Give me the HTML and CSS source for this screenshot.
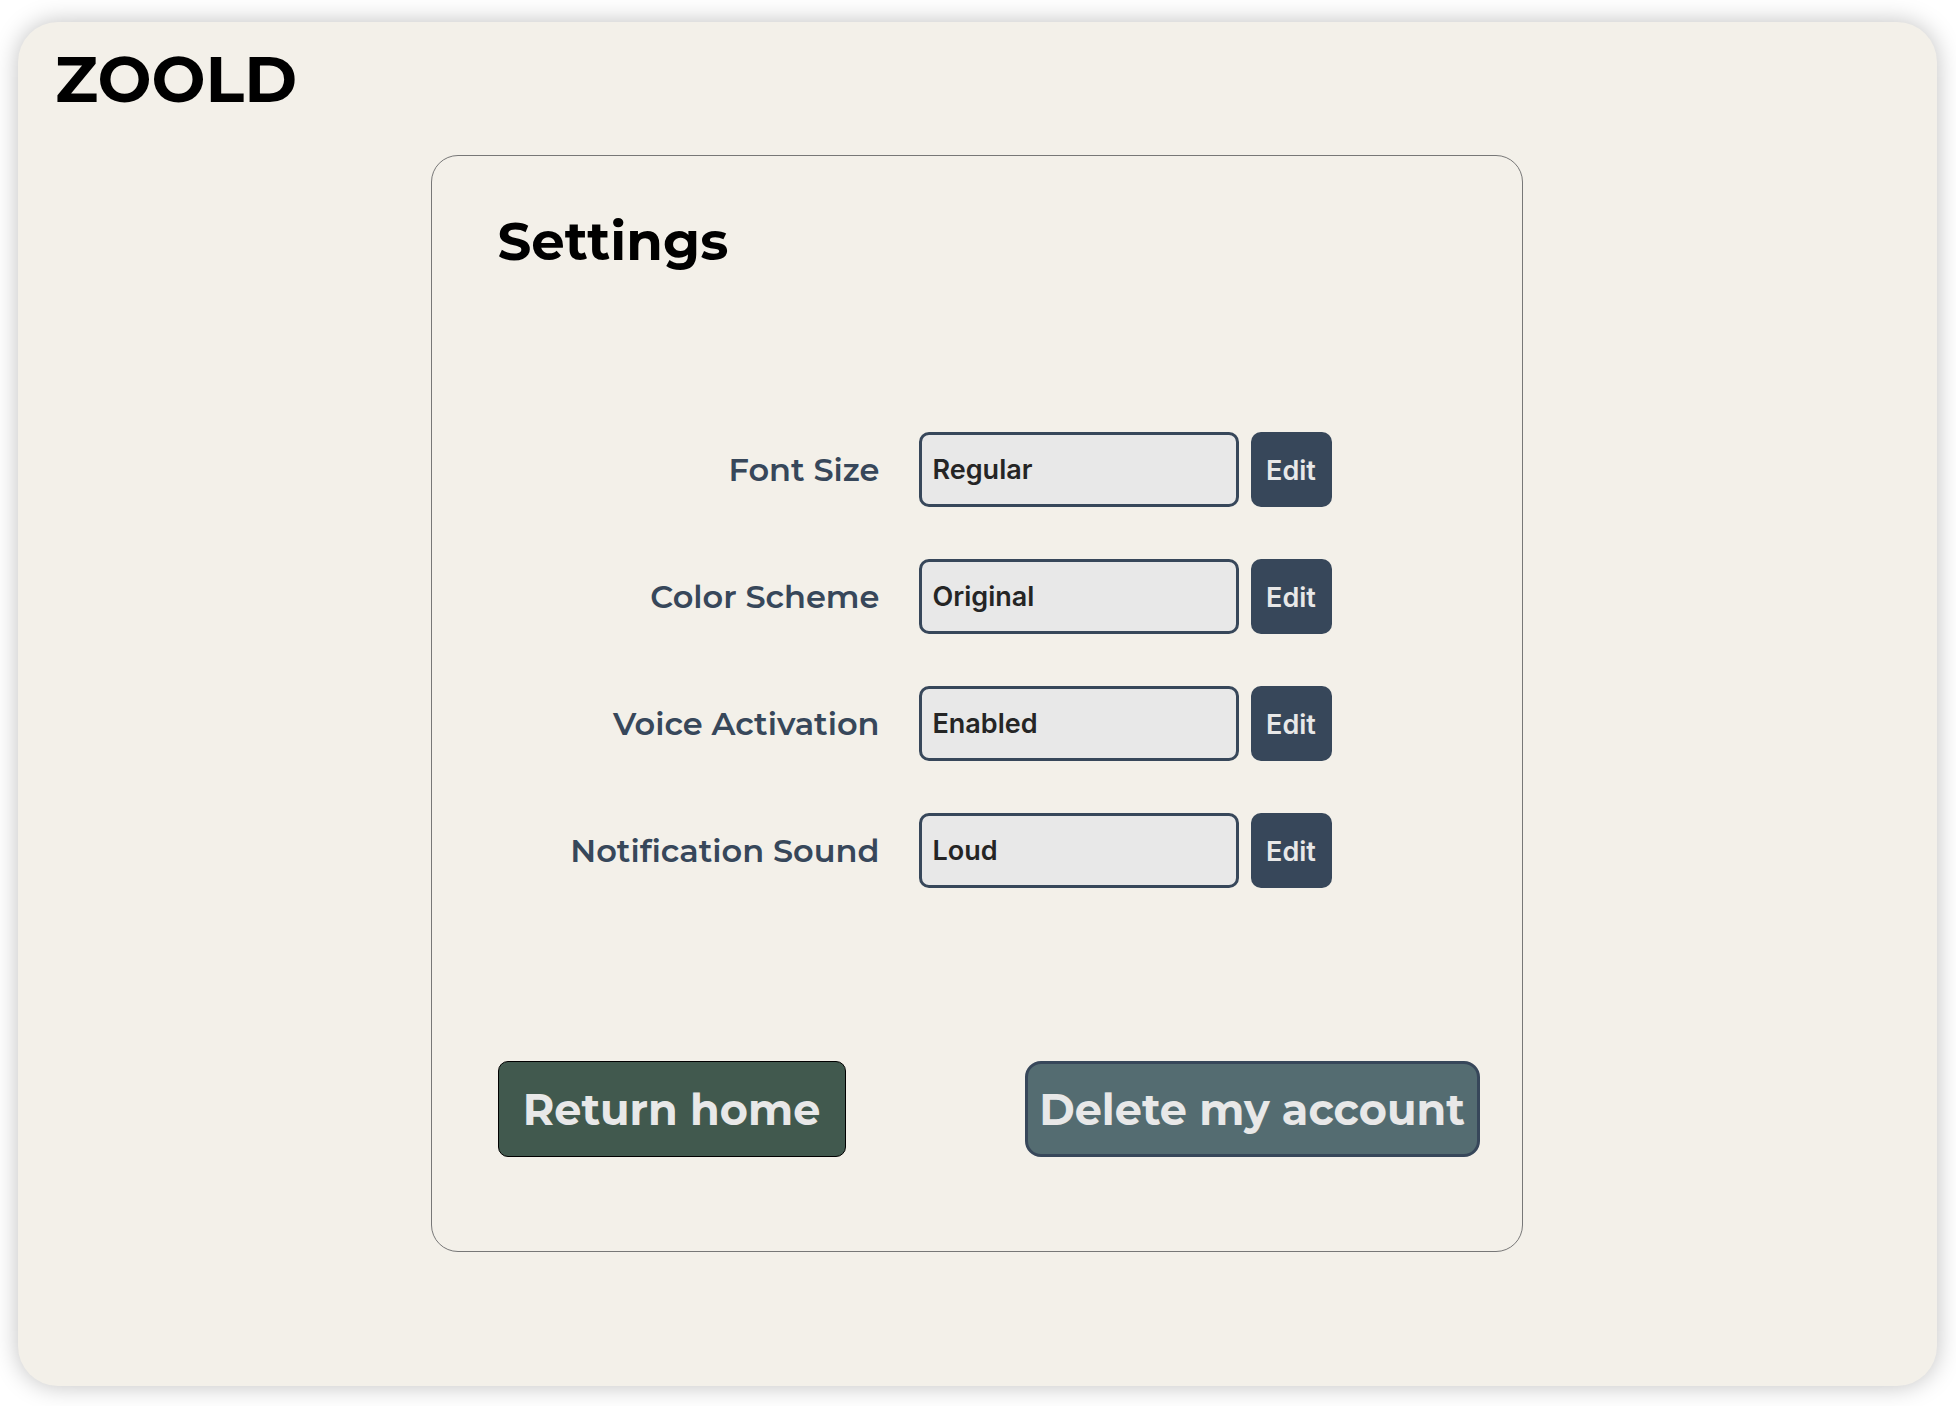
FILE: index.html
```html
<!DOCTYPE html>
<html lang="en">
<head>
<meta charset="utf-8">
<meta name="viewport" content="width=device-width, initial-scale=1">
<title>Zoold – Settings</title>
<link rel="stylesheet" href="styles.css">
</head>
<body>
<div class="frame">
  <header class="brand">ZOOLD</header>
  <main class="card">
    <h1 class="title">Settings</h1>
    <form class="settings">
      <label class="label" for="font-size">Font Size</label>
      <input class="field" id="font-size" type="text" value="Regular" readonly>
      <button class="edit" type="button">Edit</button>
      <label class="label" for="color-scheme">Color Scheme</label>
      <input class="field" id="color-scheme" type="text" value="Original" readonly>
      <button class="edit" type="button">Edit</button>
      <label class="label" for="voice">Voice Activation</label>
      <input class="field" id="voice" type="text" value="Enabled" readonly>
      <button class="edit" type="button">Edit</button>
      <label class="label" for="sound">Notification Sound</label>
      <input class="field" id="sound" type="text" value="Loud" readonly>
      <button class="edit" type="button">Edit</button>
    </form>
    <div class="actions">
      <button class="action home" type="button">Return home</button>
      <button class="action delete" type="button">Delete my account</button>
    </div>
  </main>
</div>
</body>
</html>
```
FILE: styles.css
```css
* { box-sizing: border-box; }

body {
  margin: 0;
  padding: 22px 19px 20px 18px;
  background: #fff;
  font-family: Montserrat, Inter, sans-serif;
}

.frame {
  min-height: calc(100vh - 42px);
  padding: 17px 39px 134px 37px;
  border-radius: 40px;
  background: #f3f0e9;
  box-shadow: 0 0 24px rgba(0, 0, 0, 0.25);
}

.brand {
  color: #000;
  font-size: 64px;
  font-weight: 700;
  line-height: 80px;
}

.card {
  max-width: 1092px;
  margin: 36px auto 0;
  padding: 45px 42px 94px 66px;
  border: 1px solid #777;
  border-radius: 27px;
}

.title {
  margin: 0;
  color: #000;
  font-size: 53px;
  font-weight: 700;
  line-height: 80px;
}

.settings {
  display: grid;
  grid-template-columns: 1fr 320px 81px;
  gap: 52px 12px;
  align-items: center;
  margin-top: 151px;
  padding-right: 148px;
}

.label {
  padding-right: 27px;
  color: #37475a;
  font-size: 32px;
  font-weight: 600;
  line-height: 40px;
  text-align: right;
}

.field,
.edit {
  width: 100%;
  height: 75px;
  border-radius: 10px;
  font-family: Inter, sans-serif;
  font-size: 27px;
  font-weight: 600;
}

.field {
  padding: 0 11px;
  border: 3px solid #37475a;
  background: #e8e8e8;
  color: #252525;
}

.edit {
  padding: 2px 0 0;
  border: 0;
  background: #37475a;
  color: #e8e8e8;
}

.actions {
  display: flex;
  justify-content: space-between;
  margin-top: 173px;
}

.action {
  height: 96px;
  padding: 0;
  color: #e8e8e8;
  font-family: inherit;
  font-size: 43px;
  font-weight: 700;
}

.home {
  width: 348px;
  border: 1px solid #000;
  border-radius: 10px;
  background: #41594e;
}

.delete {
  width: 455px;
  border: 3px solid #37475a;
  border-radius: 16px;
  background: #546c71;
}
```
